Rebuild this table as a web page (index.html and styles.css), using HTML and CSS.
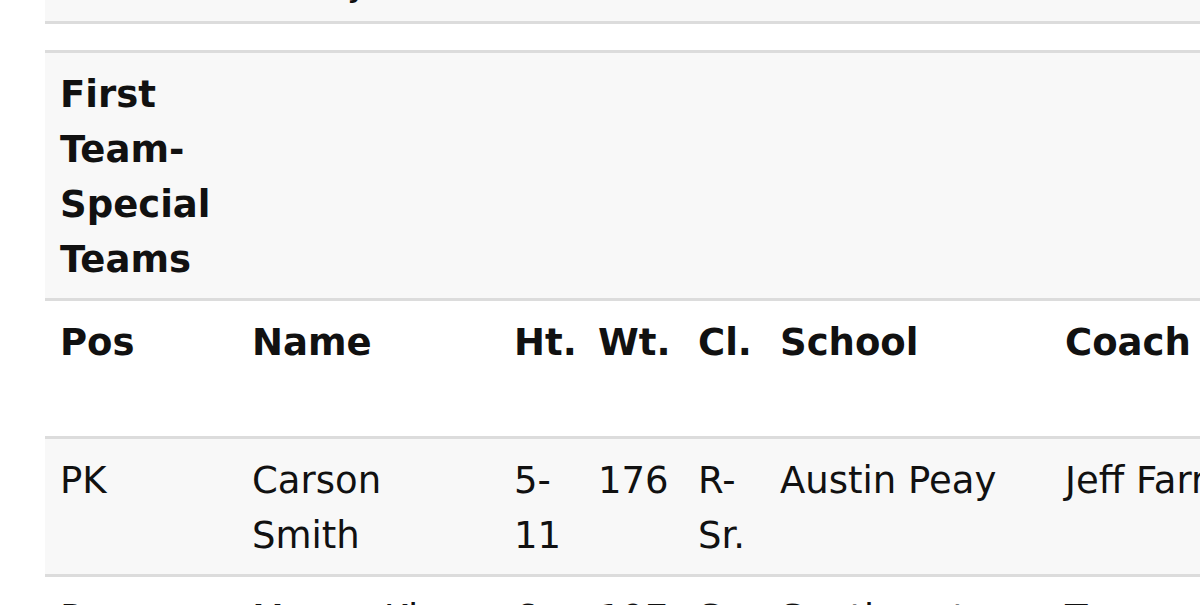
FILE: index.html
```html
<!DOCTYPE html>
<html lang="en">
<head>
<meta charset="utf-8">
<title>First Team - Special Teams</title>
<link rel="stylesheet" href="styles.css">
</head>
<body>
<div class="page">
  <table class="roster">
    <colgroup>
      <col class="c-pos">
      <col class="c-name">
      <col class="c-ht">
      <col class="c-wt">
      <col class="c-cl">
      <col class="c-school">
      <col class="c-coach">
      <col class="c-extra">
    </colgroup>
    <tbody>
      <tr>
        <td></td><td>Bobby</td><td></td><td></td><td></td><td></td><td></td><td></td>
      </tr>
      <tr class="spacer">
        <td></td><td></td><td></td><td></td><td></td><td></td><td></td><td></td>
      </tr>
      <tr>
        <th>First Team-Special Teams</th><th></th><th></th><th></th><th></th><th></th><th></th><th></th>
      </tr>
      <tr>
        <th>Pos</th><th>Name</th><th>Ht.</th><th>Wt.</th><th>Cl.</th><th>School</th><th>Coach</th><th>Previous Honors</th>
      </tr>
      <tr>
        <td>PK</td><td>Carson Smith</td><td>5-11</td><td>176</td><td>R-Sr.</td><td>Austin Peay</td><td>Jeff Farris</td><td>First Team</td>
      </tr>
      <tr>
        <td>P</td><td>Mason King</td><td>6-1</td><td>197</td><td>Sr.</td><td>Southeast</td><td>Tom Matukewicz</td><td>None</td>
      </tr>
    </tbody>
  </table>
</div>
</body>
</html>
```

FILE: styles.css
```css
html, body {
  margin: 0;
  padding: 0;
  background: #ffffff;
}

body {
  width: 1200px;
  height: 605px;
  overflow: hidden;
  font-family: "DejaVu Sans", "Liberation Sans", sans-serif;
  color: #111111;
}

.page {
  padding-left: 45px;
}

.roster {
  width: 1600px;
  margin-top: -59px;
  border-collapse: collapse;
  table-layout: fixed;
  font-size: 37px;
  line-height: 55px;
}

.c-pos { width: 192px; }
.c-name { width: 262px; }
.c-ht { width: 84px; }
.c-wt { width: 100px; }
.c-cl { width: 82px; }
.c-school { width: 285px; }
.c-coach { width: 300px; }
.c-extra { width: 295px; }

.roster td,
.roster th {
  padding: 14px 15px 11px;
  text-align: left;
  vertical-align: top;
  border-bottom: 3px solid #dcdcdc;
  overflow: visible;
  white-space: normal;
}

.roster th {
  font-weight: 700;
}

.roster td {
  font-weight: 400;
}

.roster tr:nth-child(odd) {
  background: #f8f8f8;
}

.roster tr:nth-child(even) {
  background: #ffffff;
}

.roster .spacer td {
  padding: 0;
  height: 26px;
  line-height: 26px;
}
```
